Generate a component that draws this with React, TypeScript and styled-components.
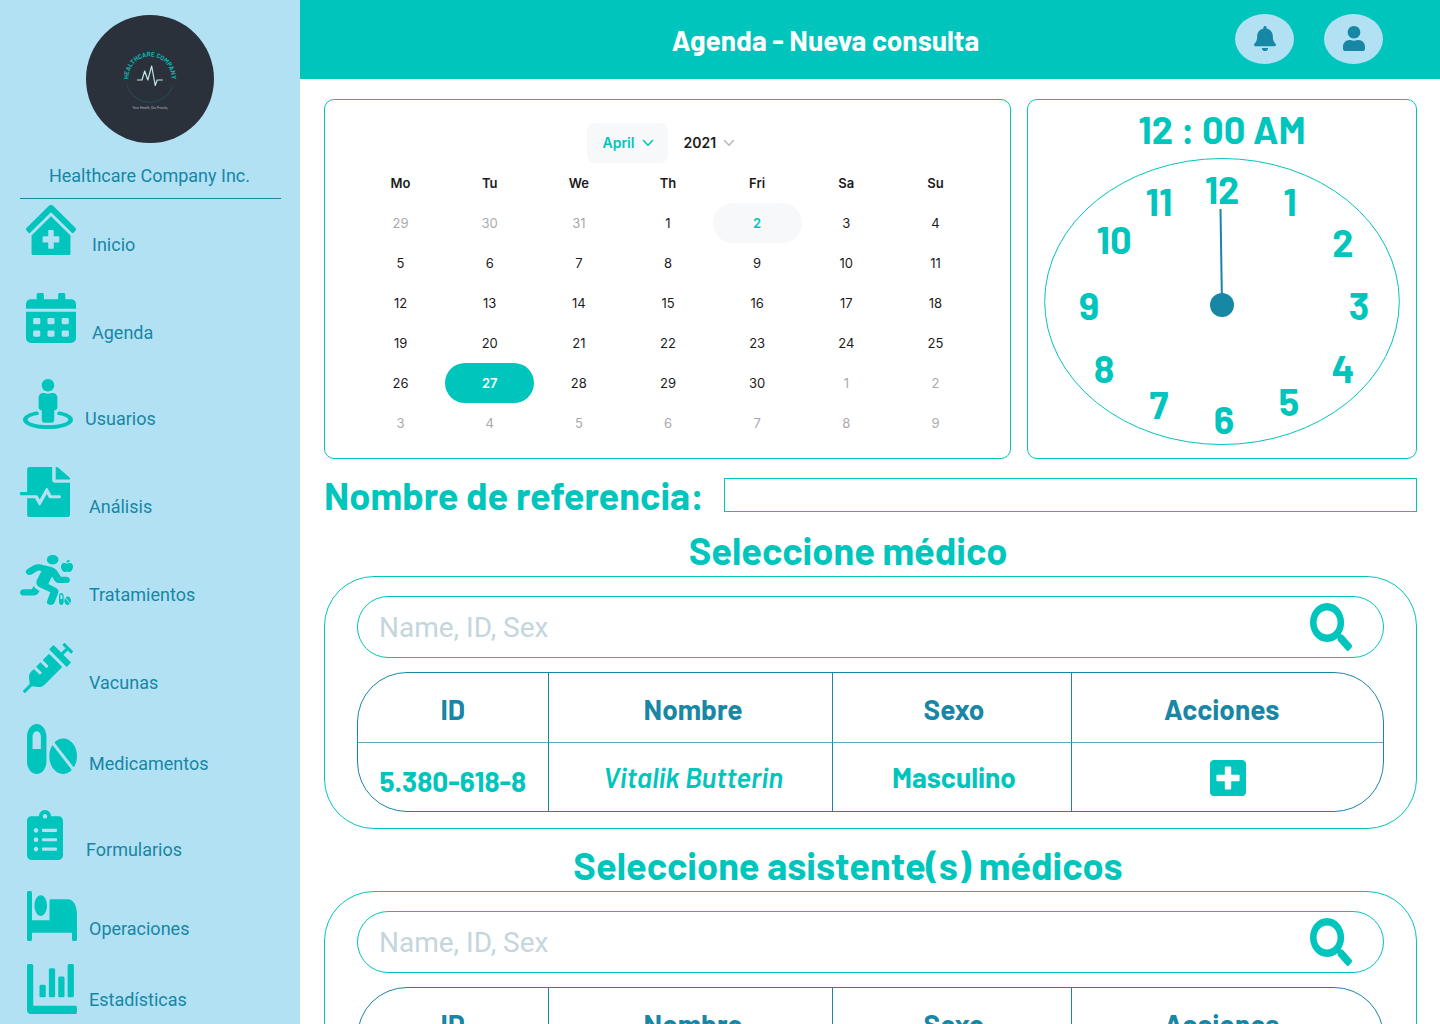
import React from "react";
import styled, { createGlobalStyle } from "styled-components";
import type { IconType } from "react-icons";
import {
  FaAppleAlt,
  FaBed,
  FaBell,
  FaCalendarAlt,
  FaChartBar,
  FaClinicMedical,
  FaClipboardList,
  FaFileMedicalAlt,
  FaPills,
  FaPlusSquare,
  FaRunning,
  FaSearch,
  FaStreetView,
  FaSyringe,
  FaUser,
} from "react-icons/fa";

const teal = "#00c5bc";
const blue = "#1886a5";
const sky = "#b1e1f3";
const display = `Barlow, Roboto, "Liberation Sans", sans-serif`;
const body = `Roboto, "Liberation Sans", sans-serif`;

const GlobalStyle = createGlobalStyle`
  *, *::before, *::after { box-sizing: border-box; }
  body { margin: 0; background: #fff; font-family: ${body}; }
  button, input, select { font: inherit; color: inherit; }
  button { padding: 0; border: 0; background: none; cursor: pointer; }
  h1, h2, p, ul { margin: 0; padding: 0; }
`;

const Shell = styled.div`
  display: grid;
  grid-template-columns: 300px minmax(0, 1fr);
  height: 100vh;
`;

const Sidebar = styled.aside`
  display: flex;
  flex-direction: column;
  align-items: center;
  padding-top: 15px;
  background: ${sky};
  color: ${blue};
  overflow: hidden;
`;

const Company = styled.p`
  align-self: stretch;
  margin: 20px 19px 0 20px;
  padding: 0 2px 10px 0;
  border-bottom: 1px solid ${blue};
  font-size: 18px;
  line-height: 25px;
  text-align: center;
`;

const NavList = styled.ul`
  align-self: stretch;
  padding-top: 6px;
  list-style: none;
`;

const NavItem = styled.li<{ $space: number }>`
  margin-bottom: ${(p) => p.$space}px;
`;

const NavLink = styled.a<{ $text: number; $line: number }>`
  display: grid;
  grid-template-columns: ${(p) => p.$text}px 1fr;
  align-items: end;
  color: inherit;
  font-size: 18px;
  line-height: ${(p) => p.$line}px;
  text-decoration: none;
`;

const IconSlot = styled.span<{ $inset: number }>`
  display: flex;
  padding-left: ${(p) => p.$inset}px;
  color: ${teal};
`;

const RunnerBox = styled.span`
  display: flex;
  position: relative;
`;

const RunnerBadge = styled.span<{ $top: number; $left: number }>`
  display: flex;
  position: absolute;
  top: ${(p) => p.$top}px;
  left: ${(p) => p.$left}px;
`;

const Page = styled.div`
  display: flex;
  flex-direction: column;
  min-height: 0;
`;

const Header = styled.header`
  flex: none;
  display: flex;
  align-items: center;
  gap: 30px;
  height: 79px;
  padding: 0 57px 2px 146px;
  background: ${teal};
`;

const Title = styled.h1`
  flex: 1;
  padding-top: 2px;
  color: #fff;
  font: 700 28px/34px ${display};
  text-align: center;
`;

const RoundButton = styled.button`
  display: grid;
  place-items: center;
  width: 59px;
  height: 50px;
  border-radius: 50%;
  background: ${sky};
  color: ${blue};
`;

const Content = styled.main`
  flex: 1;
  min-height: 0;
  padding: 20px 23px 20px 24px;
  overflow-y: auto;
  scrollbar-width: none;
`;

const TopRow = styled.div`
  display: grid;
  grid-template-columns: minmax(0, 1fr) 390px;
  gap: 16px;
`;

const Panel = styled.section`
  border: 1px solid ${teal};
  border-radius: 10px;
`;

const CalendarPanel = styled(Panel)`
  padding: 23px 30px 15px 31px;
  font-family: Inter, "Liberation Sans", sans-serif;
`;

const Pickers = styled.div`
  display: flex;
  justify-content: center;
  padding-right: 1px;
`;

const Picker = styled.label<{ $active?: boolean }>`
  display: flex;
  position: relative;
  width: 81px;
  border-radius: 8px;
  background: ${(p) => (p.$active ? "#f7f8fa" : "none")};
  color: ${(p) => (p.$active ? teal : "#1b1b1d")};
  svg {
    position: absolute;
    top: 16px;
    right: 14px;
    color: ${(p) => (p.$active ? teal : "#b9babd")};
    pointer-events: none;
  }
`;

const PickerSelect = styled.select`
  width: 100%;
  height: 40px;
  padding: 0 0 1px 16px;
  border: 0;
  background: none;
  appearance: none;
  font-size: 14px;
  font-weight: 600;
`;

const Month = styled.table`
  width: 100%;
  table-layout: fixed;
  border-collapse: collapse;
  font-size: 13px;
  th, td { height: 40px; padding: 0; text-align: center; }
  th { color: #1b1b1d; font-weight: 600; }
`;

const Day = styled.button<{ $kind: string }>`
  display: block;
  width: 100%;
  height: 40px;
  border-radius: 20px;
  background: ${(p) =>
    p.$kind === "picked" ? teal : p.$kind === "today" ? "#f7f8fa" : "none"};
  color: ${(p) =>
    p.$kind === "picked" ? "#fff" : p.$kind === "today" ? teal : p.$kind === "out" ? "#a9aaad" : "#1b1b1d"};
  font-weight: ${(p) => (p.$kind === "picked" || p.$kind === "today" ? 600 : 400)};
`;

const ClockPanel = styled(Panel)`
  display: flex;
  flex-direction: column;
  align-items: center;
  padding: 5px 16px 0;
`;

const Time = styled.p`
  margin-bottom: 5px;
  color: ${teal};
  font: 700 38px/48px ${display};
`;

const Face = styled.svg`
  display: block;
  width: 100%;
  font: 700 38px ${display};
`;

const Reference = styled.div`
  display: grid;
  grid-template-columns: 400px minmax(0, 1fr);
  align-items: center;
  margin-top: 12px;
  color: ${teal};
`;

const ReferenceLabel = styled.label`
  font: 700 38px/48px ${display};
`;

const ReferenceInput = styled.input`
  height: 34px;
  padding: 0 10px;
  border: 1px solid ${teal};
  background: #fff;
  font-size: 18px;
`;

const SectionTitle = styled.h2`
  margin: 7px 0 2px;
  padding-right: 45px;
  color: ${teal};
  font: 700 38px/48px ${display};
  text-align: center;
`;

const PeoplePanel = styled(Panel)`
  margin-bottom: 12px;
  padding: 19px 32px 16px;
  border-radius: 50px;
`;

const Search = styled.form`
  display: flex;
  align-items: center;
  height: 62px;
  margin-bottom: 14px;
  padding: 0 31px 0 21px;
  border: 1px solid ${teal};
  border-radius: 31px;
  color: ${teal};
`;

const SearchInput = styled.input`
  flex: 1;
  min-width: 0;
  height: 48px;
  padding: 0;
  border: 0;
  outline: 0;
  background: none;
  font-size: 28px;
  &::placeholder { color: #c4d6dd; opacity: 1; }
`;

const SearchButton = styled.button`
  display: flex;
`;

const People = styled.table`
  width: 100%;
  table-layout: fixed;
  border: 1px solid ${blue};
  border-collapse: separate;
  border-spacing: 0;
  border-radius: 50px;
  font: 700 28px/34px ${display};
  th, td { padding: 0; text-align: center; }
  th { height: 70px; padding-top: 3px; border-bottom: 1px solid #5fa9be; color: ${blue}; }
  td { height: 68px; color: ${teal}; }
  th + th, td + td { border-left: 1px solid ${blue}; }
  td:first-child { padding-top: 8px; }
  th:nth-child(2), td:nth-child(2) { padding-left: 6px; }
  th:nth-child(3), td:nth-child(3) { padding-left: 4px; }
  th:nth-child(4) { padding-right: 12px; }
`;

const Column = styled.col<{ $share: string }>`
  width: ${(p) => p.$share};
`;

const PersonName = styled.em`
  font-weight: 600;
`;

const AddButton = styled.button`
  display: inline-flex;
  vertical-align: middle;
`;

/* Draws an icon from the given view box, filling its whole slot. */
function Glyph({ icon: Icon, box, w = 50, h = 50 }: { icon: IconType; box: string; w?: number; h?: number }) {
  return <Icon viewBox={box} width={w} height={h} style={{ width: w, height: h }} preserveAspectRatio="none" aria-hidden />;
}

function Chevron() {
  return (
    <svg width="12" height="8" viewBox="0 0 12 8" fill="none" stroke="currentColor" strokeWidth="1.6" strokeLinecap="round" strokeLinejoin="round" aria-hidden>
      <path d="M1.5 1.5 6 6.2l4.500-4.700" />
    </svg>
  );
}

function Logo() {
  return (
    <svg width="128" height="128" viewBox="0 0 128 128" role="img" aria-label="Healthcare Company">
      <circle cx="64" cy="64" r="64" fill="#2a313b" />
      <path id="brand-arc" d="M42.500 63A21.500 21.500 0 1 1 85.500 63" fill="none" />
      <text fill="#10b3b3" fontFamily="Barlow, Roboto, sans-serif" fontWeight="700" fontSize="6.5" textAnchor="middle">
        <textPath href="#brand-arc" startOffset="50%">HEALTHCARE COMPANY</textPath>
      </text>
      <path d="M51 65h5l2.700-9 3.100 9 3.900-14 3.500 19.500 2-5.500h5.600" fill="none" stroke="#bfe9e2" strokeWidth="1.200" strokeLinejoin="round" />
      <path d="M41 70A24 24 0 0 0 87 70" fill="none" stroke="#1d7f8b" strokeWidth="0.800" strokeDasharray="1 1.200" />
      <text x="64" y="94" fill="#aab6bb" fontFamily="Roboto, sans-serif" fontSize="3.300" textAnchor="middle">
        Your Health, Our Priority
      </text>
    </svg>
  );
}

function Runner() {
  return (
    <RunnerBox>
      <Glyph icon={FaRunning} box="0 0 416 512" />
      <RunnerBadge $top={5} $left={41}>
        <Glyph icon={FaAppleAlt} box="0 0 448 512" w={12} h={12} />
      </RunnerBadge>
      <RunnerBadge $top={38} $left={39}>
        <Glyph icon={FaPills} box="0 32 576 448" w={12} h={12} />
      </RunnerBadge>
    </RunnerBox>
  );
}

const nav = [
  { label: "Inicio", icon: <Glyph icon={FaClinicMedical} box="0 0 576 512" />, inset: 26, text: 92, line: 20, space: 38 },
  { label: "Agenda", icon: <Glyph icon={FaCalendarAlt} box="0 0 448 512" />, inset: 26, text: 92, line: 20, space: 36 },
  { label: "Usuarios", icon: <Glyph icon={FaStreetView} box="0 0 512 512" />, inset: 23, text: 85, line: 20, space: 38 },
  { label: "Análisis", icon: <Glyph icon={FaFileMedicalAlt} box="0 0 448 512" />, inset: 20, text: 89, line: 20, space: 38 },
  { label: "Tratamientos", icon: <Runner />, inset: 20, text: 89, line: 20, space: 38 },
  { label: "Vacunas", icon: <Glyph icon={FaSyringe} box="0 0 512 512" />, inset: 23, text: 89, line: 20, space: 31 },
  { label: "Medicamentos", icon: <Glyph icon={FaPills} box="0 32 576 448" />, inset: 27, text: 89, line: 20, space: 36 },
  { label: "Formularios", icon: <Glyph icon={FaClipboardList} box="0 0 384 512" w={36} />, inset: 27, text: 86, line: 20, space: 31 },
  { label: "Operaciones", icon: <Glyph icon={FaBed} box="0 64 640 384" />, inset: 27, text: 89, line: 24, space: 23 },
  { label: "Estadísticas", icon: <Glyph icon={FaChartBar} box="0 64 512 384" />, inset: 27, text: 89, line: 28, space: 0 },
];

const months = ["January", "February", "March", "April", "May", "June", "July", "August", "September", "October", "November", "December"];
const weekdays = ["Mo", "Tu", "We", "Th", "Fri", "Sa", "Su"];

/* Six weeks starting on Monday, 29 March 2021. */
const weeks = Array.from({ length: 6 }, (_, w) =>
  Array.from({ length: 7 }, (_, d) => {
    const date = new Date(2021, 2, 29 + w * 7 + d);
    const day = date.getDate();
    const kind = date.getMonth() !== 3 ? "out" : day === 2 ? "today" : day === 27 ? "picked" : "in";
    return { day, kind };
  })
);

const numerals = [
  { n: 12, x: 178, y: 46 },
  { n: 1, x: 246, y: 58 },
  { n: 2, x: 299, y: 99 },
  { n: 3, x: 315, y: 162 },
  { n: 4, x: 299, y: 225 },
  { n: 5, x: 245, y: 258 },
  { n: 6, x: 180, y: 276 },
  { n: 7, x: 115, y: 261 },
  { n: 8, x: 60, y: 225 },
  { n: 9, x: 45, y: 162 },
  { n: 10, x: 70, y: 96 },
  { n: 11, x: 115, y: 58 },
];

function Calendar() {
  return (
    <CalendarPanel>
      <Pickers>
        <Picker $active>
          <PickerSelect aria-label="Mes" defaultValue="April">
            {months.map((m) => <option key={m}>{m}</option>)}
          </PickerSelect>
          <Chevron />
        </Picker>
        <Picker>
          <PickerSelect aria-label="Año" defaultValue="2021">
            {["2020", "2021", "2022"].map((y) => <option key={y}>{y}</option>)}
          </PickerSelect>
          <Chevron />
        </Picker>
      </Pickers>
      <Month>
        <thead>
          <tr>{weekdays.map((d) => <th key={d} scope="col">{d}</th>)}</tr>
        </thead>
        <tbody>
          {weeks.map((week, i) => (
            <tr key={i}>
              {week.map((d) => (
                <td key={d.day}><Day type="button" $kind={d.kind}>{d.day}</Day></td>
              ))}
            </tr>
          ))}
        </tbody>
      </Month>
    </CalendarPanel>
  );
}

function Clock() {
  return (
    <ClockPanel>
      <Time>12 : 00 AM</Time>
      <Face viewBox="0 0 356 287">
        <ellipse cx="178" cy="143.500" rx="177.300" ry="143" fill="none" stroke={teal} />
        {numerals.map((m) => (
          <text key={m.n} x={m.x} y={m.y} fill={teal} textAnchor="middle">{m.n}</text>
        ))}
        <path d="M176.500 51 178 147" stroke={blue} strokeWidth="2" />
        <circle cx="178" cy="147" r="12" fill={blue} />
      </Face>
    </ClockPanel>
  );
}

function PeopleSection({ title }: { title: string }) {
  return (
    <>
      <SectionTitle>{title}</SectionTitle>
      <PeoplePanel>
        <Search onSubmit={(e) => e.preventDefault()}>
          <SearchInput type="text" placeholder="Name, ID, Sex" aria-label={title} />
          <SearchButton type="submit" aria-label="Buscar">
            <Glyph icon={FaSearch} box="0 0 512 512" w={42} h={48} />
          </SearchButton>
        </Search>
        <People>
          <colgroup>
            <Column $share="18.5%" />
            <Column $share="27.7%" />
            <Column $share="23.4%" />
            <Column $share="30.4%" />
          </colgroup>
          <thead>
            <tr>
              <th scope="col">ID</th>
              <th scope="col">Nombre</th>
              <th scope="col">Sexo</th>
              <th scope="col">Acciones</th>
            </tr>
          </thead>
          <tbody>
            <tr>
              <td>5.380-618-8</td>
              <td><PersonName>Vitalik Butterin</PersonName></td>
              <td>Masculino</td>
              <td>
                <AddButton type="button" aria-label="Agregar">
                  <Glyph icon={FaPlusSquare} box="0 32 448 448" w={36} h={36} />
                </AddButton>
              </td>
            </tr>
          </tbody>
        </People>
      </PeoplePanel>
    </>
  );
}

export default function App() {
  return (
    <>
      <GlobalStyle />
      <Shell>
        <Sidebar>
          <Logo />
          <Company>Healthcare Company Inc.</Company>
          <NavList>
            {nav.map((item) => (
              <NavItem key={item.label} $space={item.space}>
                <NavLink href="#" $text={item.text} $line={item.line}>
                  <IconSlot $inset={item.inset}>{item.icon}</IconSlot>
                  {item.label}
                </NavLink>
              </NavItem>
            ))}
          </NavList>
        </Sidebar>
        <Page>
          <Header>
            <Title>Agenda - Nueva consulta</Title>
            <RoundButton type="button" aria-label="Notificaciones">
              <Glyph icon={FaBell} box="0 0 448 512" w={22} h={25} />
            </RoundButton>
            <RoundButton type="button" aria-label="Perfil">
              <Glyph icon={FaUser} box="0 0 448 512" w={22} h={25} />
            </RoundButton>
          </Header>
          <Content>
            <TopRow>
              <Calendar />
              <Clock />
            </TopRow>
            <Reference>
              <ReferenceLabel htmlFor="reference">Nombre de referencia:</ReferenceLabel>
              <ReferenceInput id="reference" type="text" />
            </Reference>
            <PeopleSection title="Seleccione médico" />
            <PeopleSection title="Seleccione asistente(s) médicos" />
          </Content>
        </Page>
      </Shell>
    </>
  );
}
